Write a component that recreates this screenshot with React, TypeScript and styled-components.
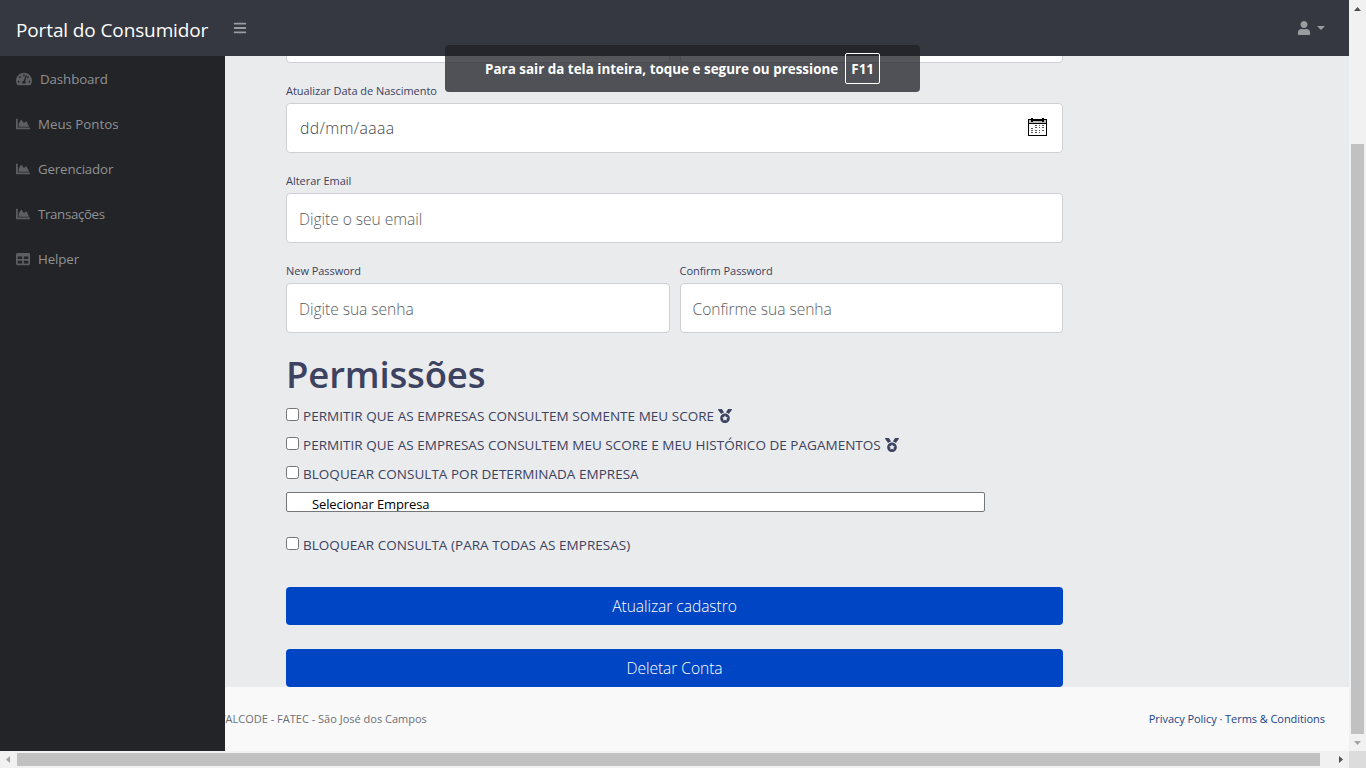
import React from "react";
import styled, { createGlobalStyle, css } from "styled-components";
import { FaBars, FaChartArea, FaMedal, FaTable, FaTachometerAlt, FaUser } from "react-icons/fa";

const Global = createGlobalStyle`
  *, *::before, *::after { box-sizing: border-box; }
  html, body { margin: 0; overflow: hidden; }
  body { font-family: "Open Sans", "Noto Sans", sans-serif; color: #3c4260; }
`;

const Screen = styled.div`
  position: relative;
  display: grid;
  grid-template-columns: 1349px 17px;
  grid-template-rows: 751px 17px;
  width: 1366px;
  height: 768px;
  overflow: hidden;
`;

const Viewport = styled.div`
  display: flex;
  flex-direction: column;
  min-width: 0;
  overflow: hidden;
`;

const TopNav = styled.nav`
  display: flex;
  align-items: center;
  flex: none;
  height: 56px;
  padding: 0 24px 0 16px;
  background: #353840;
`;

const Brand = styled.a`
  width: 217px;
  padding-top: 4px;
  color: #fff;
  font-size: 19px;
  line-height: 28px;
  letter-spacing: -0.12px;
  white-space: nowrap;
`;

const NavButton = styled.button`
  display: flex;
  align-items: center;
  gap: 6px;
  padding: 0;
  border: 0;
  background: none;
  color: #9b9ca0;
  font-size: 14px;
`;

const UserButton = styled(NavButton)`
  margin-left: auto;
`;

const Caret = styled.span`
  border-top: 4px solid currentColor;
  border-left: 4px solid transparent;
  border-right: 4px solid transparent;
`;

const Body = styled.div`
  display: flex;
  flex: 1;
  min-height: 0;
`;

const Sidebar = styled.aside`
  display: flex;
  flex-direction: column;
  flex: none;
  width: 225px;
  background: #222427;
`;

const SideLink = styled.a<{ $track?: number }>`
  display: flex;
  align-items: center;
  height: 45px;
  padding: 0 16px 0;
  color: #909193;
  font-size: 13.3px;
  font-weight: 400;
  letter-spacing: ${(p) => p.$track ?? 0}px;

  svg {
    flex: none;
    margin-right: 8px;
    color: #5c5e61;
  }
`;

const Content = styled.div`
  display: flex;
  flex-direction: column;
  flex: 1;
  min-width: 0;
  overflow: hidden;
`;

const Main = styled.main`
  flex: none;
  height: 631px;
  padding-left: 61px;
  background: #eaebed;
  overflow: hidden;
`;

const Form = styled.form`
  display: flex;
  flex-direction: column;
  width: 777px;
`;

const FieldRow = styled.div<{ $scrolled?: boolean }>`
  display: grid;
  grid-auto-flow: column;
  grid-auto-columns: 1fr;
  gap: 10px;
  ${(p) => p.$scrolled && css`margin-top: -43px;`}
`;

const Field = styled.div`
  display: flex;
  flex-direction: column;
`;

const Label = styled.label`
  height: 40px;
  padding-top: 20px;
  font-size: 11px;
  line-height: 16px;
  letter-spacing: -0.04px;
`;

const inputBox = css`
  width: 100%;
  height: 50px;
  border: 1px solid #ced0d4;
  border-radius: 4px;
  background: #fff;
`;

const Input = styled.input`
  ${inputBox}
  padding: 1px 12px 0;
  color: #495057;
  font: 300 15.6px "Open Sans", sans-serif;
  letter-spacing: -0.04px;
  outline: none;

  &::placeholder {
    color: #585d62;
    opacity: 1;
  }
`;

const DateInput = styled.div`
  ${inputBox}
  display: flex;
  align-items: center;
  justify-content: space-between;
  padding: 0 15px 0 13px;
  color: #43474c;
  font-size: 15.8px;
  font-weight: 300;
  letter-spacing: 0.35px;

  svg {
    margin-bottom: 2px;
  }
`;

const Heading = styled.h1`
  margin: 18px 0 0;
  height: 50px;
  font-size: 36.5px;
  font-weight: 600;
  line-height: 47px;
  letter-spacing: -0.15px;
`;

const Option = styled.label`
  display: flex;
  align-items: center;
  height: 29px;
  font-size: 13.5px;
  letter-spacing: 0.03px;
  white-space: nowrap;

  svg {
    margin-left: 4px;
  }
`;

const Checkbox = styled.input`
  flex: none;
  width: 13px;
  height: 13px;
  margin: 0 4px 3px 0;
  border: 1px solid #767676;
  border-radius: 2.5px;
  background: #fff;
  appearance: none;
`;

const CompanySelect = styled.div`
  width: 699px;
  height: 20px;
  margin: 4px 0 18px;
  padding-left: 25px;
  border: 1px solid #76777a;
  border-radius: 2px;
  background: #fff;
  color: #000;
  font-size: 13px;
  line-height: 23px;
  letter-spacing: -0.12px;
  overflow: hidden;
`;

const Actions = styled.div`
  display: flex;
  flex-direction: column;
  gap: 24px;
  margin-top: 28px;
`;

const ActionButton = styled.button`
  height: 38px;
  padding: 0;
  border: 0;
  border-radius: 4px;
  background: #0045c4;
  color: #fff;
  font: 300 15.6px "Open Sans", sans-serif;
  letter-spacing: -0.05px;
`;

const Footer = styled.footer`
  display: flex;
  align-items: center;
  justify-content: space-between;
  flex: 1;
  padding: 0 24px 2px 0;
  background: #f9f9f9;
  color: #6c7075;
  font-size: 11px;
`;

const Copyright = styled.span`
  margin-left: -6px;
  white-space: nowrap;
`;

const Legal = styled.span`
  color: #1a4487;
  letter-spacing: -0.06px;
`;

const VerticalBar = styled.div`
  display: flex;
  flex-direction: column;
  align-items: center;
  justify-content: space-between;
  background: #f1f1f1;
`;

const HorizontalBar = styled.div`
  display: flex;
  align-items: center;
  justify-content: space-between;
  background: #f1f1f1;
`;

const VerticalThumb = styled.div`
  width: 13px;
  height: 590px;
  margin-top: 127px;
  background: #c1c1c1;
`;

const HorizontalThumb = styled.div`
  width: 1303px;
  height: 13px;
  margin-right: 12px;
  background: #c1c1c1;
`;

const ScrollButton = styled.div<{ $dim?: boolean }>`
  display: flex;
  align-items: center;
  justify-content: center;
  flex: none;
  width: 17px;
  height: 17px;
  color: ${(p) => (p.$dim ? "#a3a3a3" : "#505050")};
`;

const Corner = styled.div`
  background: #dcdcdc;
`;

const FullscreenToast = styled.div`
  position: absolute;
  top: 45px;
  left: 445px;
  display: flex;
  align-items: center;
  width: 475px;
  height: 47px;
  padding-left: 40px;
  border-radius: 4px;
  background: rgba(32, 33, 38, 0.76);
  color: #fff;
  font-size: 13.4px;
  font-weight: 700;
  letter-spacing: 0.02px;
  white-space: nowrap;
`;

const KeyCap = styled.kbd`
  display: flex;
  align-items: center;
  justify-content: center;
  width: 35px;
  height: 31px;
  margin-left: 7px;
  border: 1px solid #fff;
  border-radius: 2px;
  font: inherit;
`;

const CalendarIcon = () => (
  <svg width="19" height="18" viewBox="0 0 19 18" shapeRendering="crispEdges">
    <path d="M.5 1.5h18v16H.5z" fill="#fff" stroke="#000" />
    <path d="M1 2h17v3H1z" fill="#b9b9b9" />
    <path d="M0 5.500h19M3 2.500h13" stroke="#000" />
    <path d="M4 0v4M15 0v4" stroke="#000" strokeWidth="2" />
    <path
      d="M7 7h2v1H7zM11 7h1v1h-1zM14 7h2v1h-2zM7 9h2v1H7zM11 9h1v1h-1zM14 9h2v1h-2zM3 10h2v1H3zM3 12h2v1H3zM7 12h2v1H7zM11 12h1v1h-1zM14 12h2v1h-2zM3 14h2v1H3zM7 14h2v1H7zM11 14h1v1h-1z"
      fill="#555"
    />
  </svg>
);

const arrows = {
  up: "M5 11h7L8.500 7z",
  down: "M5 7h7l-3.500 4z",
  left: "M10 5v7L6 8.500z",
  right: "M7 5v7l4-3.500z",
};

const Arrow = ({ to }: { to: keyof typeof arrows }) => (
  <svg width="17" height="17" viewBox="0 0 17 17">
    <path d={arrows[to]} fill="currentColor" />
  </svg>
);

const links = [
  { text: "Dashboard", icon: <FaTachometerAlt size={16} />, track: -0.1 },
  { text: "Meus Pontos", icon: <FaChartArea size={14} />, track: 0 },
  { text: "Gerenciador", icon: <FaChartArea size={14} />, track: -0.15 },
  { text: "Transações", icon: <FaChartArea size={14} />, track: -0.35 },
  { text: "Helper", icon: <FaTable size={14} />, track: -0.1 },
];

export default function App() {
  return (
    <Screen>
      <Global />
      <Viewport>
        <TopNav>
          <Brand>Portal do Consumidor</Brand>
          <NavButton type="button" aria-label="Menu">
            <FaBars />
          </NavButton>
          <UserButton type="button" aria-label="Conta">
            <FaUser />
            <Caret />
          </UserButton>
        </TopNav>
        <Body>
          <Sidebar>
            {links.map((l) => (
              <SideLink key={l.text} $track={l.track}>
                {l.icon}
                {l.text}
              </SideLink>
            ))}
          </Sidebar>
          <Content>
            <Main>
              <Form>
                <FieldRow $scrolled>
                  <Input />
                  <Input />
                </FieldRow>
                <Field>
                  <Label>Atualizar Data de Nascimento</Label>
                  <DateInput>
                    dd/mm/aaaa
                    <CalendarIcon />
                  </DateInput>
                </Field>
                <Field>
                  <Label>Alterar Email</Label>
                  <Input type="email" placeholder="Digite o seu email" />
                </Field>
                <FieldRow>
                  <Field>
                    <Label>New Password</Label>
                    <Input type="password" placeholder="Digite sua senha" />
                  </Field>
                  <Field>
                    <Label>Confirm Password</Label>
                    <Input type="password" placeholder="Confirme sua senha" />
                  </Field>
                </FieldRow>
                <Heading>Permissões</Heading>
                <Option>
                  <Checkbox type="checkbox" />
                  PERMITIR QUE AS EMPRESAS CONSULTEM SOMENTE MEU SCORE
                  <FaMedal size={14} />
                </Option>
                <Option>
                  <Checkbox type="checkbox" />
                  PERMITIR QUE AS EMPRESAS CONSULTEM MEU SCORE E MEU HISTÓRICO DE PAGAMENTOS
                  <FaMedal size={14} />
                </Option>
                <Option>
                  <Checkbox type="checkbox" />
                  BLOQUEAR CONSULTA POR DETERMINADA EMPRESA
                </Option>
                <CompanySelect>Selecionar Empresa</CompanySelect>
                <Option>
                  <Checkbox type="checkbox" />
                  BLOQUEAR CONSULTA (PARA TODAS AS EMPRESAS)
                </Option>
                <Actions>
                  <ActionButton type="button">Atualizar cadastro</ActionButton>
                  <ActionButton type="button">Deletar Conta</ActionButton>
                </Actions>
              </Form>
            </Main>
            <Footer>
              <Copyright>VALCODE - FATEC - São José dos Campos</Copyright>
              <Legal>Privacy Policy · Terms &amp; Conditions</Legal>
            </Footer>
          </Content>
        </Body>
      </Viewport>
      <VerticalBar>
        <ScrollButton><Arrow to="up" /></ScrollButton>
        <VerticalThumb />
        <ScrollButton $dim><Arrow to="down" /></ScrollButton>
      </VerticalBar>
      <HorizontalBar>
        <ScrollButton $dim><Arrow to="left" /></ScrollButton>
        <HorizontalThumb />
        <ScrollButton><Arrow to="right" /></ScrollButton>
      </HorizontalBar>
      <Corner />
      <FullscreenToast>
        Para sair da tela inteira, toque e segure ou pressione
        <KeyCap>F11</KeyCap>
      </FullscreenToast>
    </Screen>
  );
}
